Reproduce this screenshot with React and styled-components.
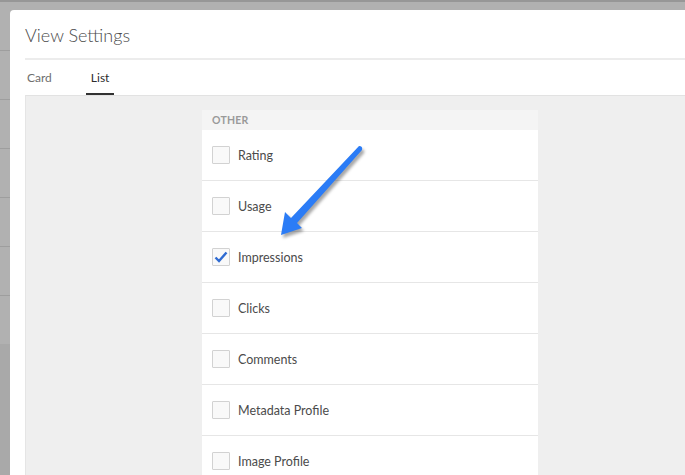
import React from 'react'
import styled, { createGlobalStyle } from 'styled-components'

const Global = createGlobalStyle`
  html, body { margin: 0; padding: 0; overflow: hidden; }
  body { font-family: Lato, "Open Sans", sans-serif; }
`

const Page = styled.div`
  position: relative;
  width: 685px;
  height: 475px;
  overflow: hidden;
  background: #a9a9a9;
`

const Backdrop = styled.div`
  border-top: 2px solid #979797;
  background: #b1b1b1;
`

const BackRow = styled.div`
  height: 48px;
  border-bottom: 1px solid #9e9e9e;
  &:last-child { border-bottom: none; }
`

const Dialog = styled.div`
  position: absolute;
  left: 10px;
  top: 10px;
  right: -30px;
  bottom: -30px;
  background: #fff;
  border-radius: 4px 0 0 0;
  padding-left: 15px;
  display: flex;
  flex-direction: column;
`

const Header = styled.div`
  height: 50px;
  display: flex;
  align-items: center;
  border-bottom: 2px solid #ececec;
  font-size: 18px;
  font-weight: 300;
  color: #4b4b4b;
  padding-top: 1px;
  box-sizing: border-box;
`

const TabBar = styled.div`
  height: 35px;
  display: flex;
  gap: 29px;
  margin-left: -3px;
`

const Tab = styled.div`
  padding: 0 5px;
  display: flex;
  align-items: center;
  font-size: 12px;
  color: ${p => (p.active ? '#2c2c2c' : '#6e6e6e')};
  border-bottom: 2px solid ${p => (p.active ? '#323232' : 'transparent')};
  box-sizing: border-box;
  padding-top: 1px;
`

const Content = styled.div`
  flex: 1;
  background: #efefef;
  border-top: 1px solid #e2e2e2;
  border-left: 1px solid #e5e5e5;
  padding: 14px 0 0 176px;
`

const Panel = styled.div`
  width: 336px;
`

const PanelHead = styled.div`
  height: 20px;
  background: #f4f4f4;
  padding-left: 10px;
  display: flex;
  align-items: center;
  font-size: 10.5px;
  font-weight: 700;
  color: #9a9a9a;
  letter-spacing: 0.2px;
`

const Row = styled.label`
  height: 50px;
  background: #fff;
  border-bottom: 1px solid #e6e6e6;
  display: flex;
  align-items: center;
  padding-left: 10px;
`

const Box = styled.span`
  width: 18px;
  height: 18px;
  box-sizing: border-box;
  border: 1.5px solid #d2d2d2;
  background: #f9f9f9;
  border-radius: 1px;
  display: flex;
  align-items: center;
  justify-content: center;
`

const Label = styled.span`
  margin-left: 8px;
  font-size: 12.5px;
  color: #4b4b4b;
`

const Arrow = styled.svg`
  position: absolute;
  left: 270px;
  top: 140px;
  width: 100px;
  height: 105px;
  overflow: visible;
`

const items = [
  { name: 'Rating' },
  { name: 'Usage' },
  { name: 'Impressions', checked: true },
  { name: 'Clicks' },
  { name: 'Comments' },
  { name: 'Metadata Profile' },
  { name: 'Image Profile' },
]

const arrowPath = 'M89,6 Q93,6 92,10 L27,83 L32,88 L11,95 L15,72 L21,78 Z'

export default function App() {
  return (
    <Page>
      <Global />
      <Backdrop>
        {[0, 1, 2, 3, 4, 5, 6].map(i => <BackRow key={i} />)}
      </Backdrop>
      <Dialog>
        <Header>View Settings</Header>
        <TabBar>
          <Tab>Card</Tab>
          <Tab active>List</Tab>
        </TabBar>
        <Content>
          <Panel>
            <PanelHead>OTHER</PanelHead>
            {items.map(it => (
              <Row key={it.name}>
                <Box>
                  {it.checked && (
                    <svg width="14" height="12" viewBox="0 0 14 12">
                      <path d="M1.5,6.5 L5,10 L12.5,1.5" fill="none" stroke="#2f6bd2" strokeWidth="2.4" strokeLinejoin="miter" />
                    </svg>
                  )}
                </Box>
                <Label>{it.name}</Label>
              </Row>
            ))}
          </Panel>
        </Content>
      </Dialog>
      <Arrow viewBox="0 0 100 105">
        <defs>
          <filter id="sh" x="-20%" y="-20%" width="140%" height="140%">
            <feGaussianBlur stdDeviation="1.5" />
          </filter>
        </defs>
        <path d={arrowPath} fill="rgba(0,0,0,0.35)" transform="translate(2,3)" filter="url(#sh)" />
        <path d={arrowPath} fill="#2b7cf6" />
      </Arrow>
    </Page>
  )
}
